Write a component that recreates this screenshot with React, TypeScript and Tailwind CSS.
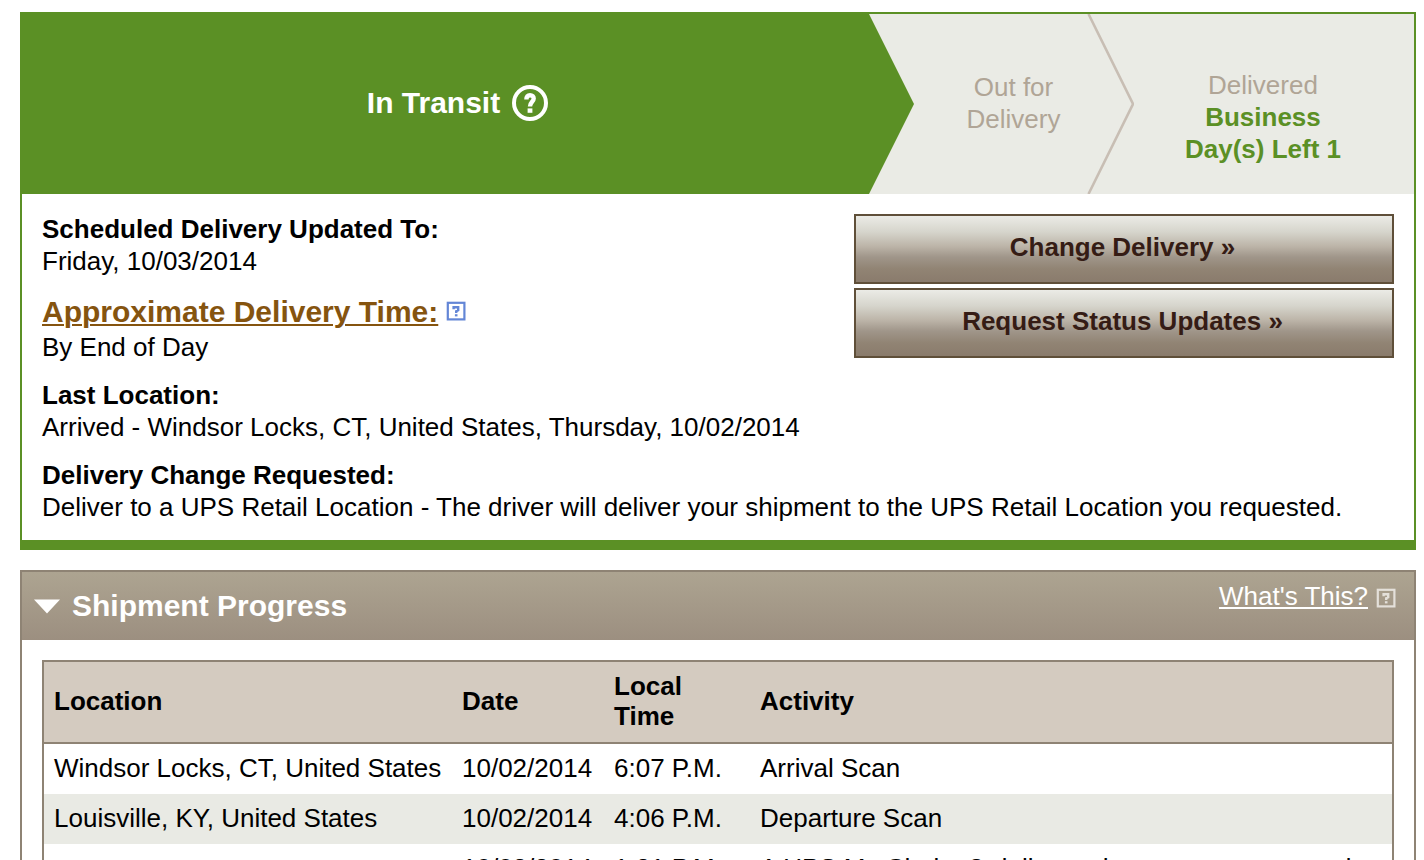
import React from 'react';

type Scan = { location: string; date: string; time: string; activity: string };

const scans: Scan[] = [
  { location: 'Windsor Locks, CT, United States', date: '10/02/2014', time: '6:07 P.M.', activity: 'Arrival Scan' },
  { location: 'Louisville, KY, United States', date: '10/02/2014', time: '4:06 P.M.', activity: 'Departure Scan' },
  { location: '', date: '10/02/2014', time: '1:21 P.M.', activity: 'A UPS My Choice® delivery change was requested' },
];

const actions = ['Change Delivery »', 'Request Status Updates »'];

const columns = ['Location', 'Date', 'Local Time', 'Activity'];

function HelpSquare({ className }: { className: string }) {
  return (
    <svg className={className} width="20" height="20" viewBox="0 0 20 20" fill="none" stroke="currentColor" aria-hidden="true">
      <rect x="1.8" y="1.8" width="16.6" height="16.6" strokeWidth="2.2" />
      <path d="M7.6 8.2V6.2H12.2V9.2L10.2 10.2V12" strokeWidth="2.4" />
      <path d="M10.2 13.2V15.4" strokeWidth="2.6" />
    </svg>
  );
}

function HelpCircle() {
  return (
    <svg width="36" height="36" viewBox="0 0 36 36" fill="none" stroke="#fff" aria-hidden="true">
      <circle cx="18" cy="18" r="16" strokeWidth="4" />
      <path d="M14.4 14.6C14.4 11.6 15.8 10.2 18 10.2C20.3 10.2 21.7 11.6 21.7 13.6C21.7 16.8 18 17 18 21.6" strokeWidth="4.4" />
      <path d="M18 23.4V27.8" strokeWidth="4.8" />
    </svg>
  );
}

function Detail({ title, children }: { title: string; children: React.ReactNode }) {
  return (
    <div>
      <h3 className="font-bold">{title}</h3>
      <p>{children}</p>
    </div>
  );
}

function StatusBanner() {
  return (
    <div className="flex h-[180px] items-stretch bg-[#eaebe5] text-center text-[#b0a596]">
      <div className="flex flex-1 items-center justify-center gap-3 bg-[#5b9025] pb-0.5 pl-6 text-[30px] font-bold leading-9 text-white">
        <span>In Transit</span>
        <button type="button" aria-label="Help with In Transit">
          <HelpCircle />
        </button>
      </div>
      <svg className="shrink-0" width="45" height="180" viewBox="0 0 45 180" aria-hidden="true">
        <path d="M0 0L45 90L0 180Z" fill="#5b9025" />
      </svg>
      <div className="flex w-[173px] shrink-0 items-center justify-center pb-0.5 pl-[26px]">
        <span className="w-24">Out for Delivery</span>
      </div>
      <svg className="shrink-0" width="47" height="180" viewBox="0 0 47 180" fill="none" aria-hidden="true">
        <path d="M1.5 0L46 90L1.5 180" stroke="#c8beb4" strokeWidth="2.6" />
      </svg>
      <div className="flex w-[280px] shrink-0 flex-col items-center justify-center pr-[22px] pt-[26px]">
        <span>Delivered</span>
        <span className="w-40 font-bold text-[#5b9025]">Business Day(s) Left 1</span>
      </div>
    </div>
  );
}

export default function App() {
  return (
    <main className="bg-white pb-5 pl-5 pr-2 pt-3 font-['Liberation_Sans',Arial,sans-serif] text-[26px] leading-8 text-black">
      <section className="border-2 border-b-10 border-[#5b9025]">
        <StatusBanner />
        <div className="flex flex-col gap-4 px-5 pb-[17px] pt-[19px]">
          <div className="flex items-start justify-between">
            <div className="flex flex-col gap-4">
              <Detail title="Scheduled Delivery Updated To:">Friday, 10/03/2014</Detail>
              <div>
                <h3 className="flex items-center gap-2 text-[30px] font-bold leading-[38px] text-[#85540f]">
                  <a href="#delivery-time" className="underline decoration-2 underline-offset-2">
                    Approximate Delivery Time:
                  </a>
                  <HelpSquare className="mb-0.5 text-[#6386d6]" />
                </h3>
                <p>By End of Day</p>
              </div>
            </div>
            <div className="flex w-[540px] flex-col gap-1 pt-px font-bold text-[#351c15]">
              {actions.map((label) => (
                <button
                  key={label}
                  type="button"
                  className="h-[70px] border-2 border-[#5f4f39] bg-[linear-gradient(to_bottom,#ebebe6_0%,#d6d5cc_24%,#bcb4a8_46%,#a0968a_62%,#918474_80%,#8a7b6c_100%)] pb-1 pr-[3px]"
                >
                  {label}
                </button>
              ))}
            </div>
          </div>
          <Detail title="Last Location:">Arrived - Windsor Locks, CT, United States, Thursday, 10/02/2014</Detail>
          <Detail title="Delivery Change Requested:">
            Deliver to a UPS Retail Location - The driver will deliver your shipment to the UPS Retail Location you requested.
          </Detail>
        </div>
      </section>

      <section className="mt-5 border-2 border-[#8e8374]">
        <div className="flex h-[68px] items-start justify-between bg-linear-to-b from-[#ada491] to-[#9c8f80] pl-3 pr-[18px] text-white">
          <h2 className="pt-4 text-[30px] font-bold leading-9">
            <button type="button" aria-expanded="true" className="flex items-center gap-3">
              <svg width="26" height="16" viewBox="0 0 26 16" aria-hidden="true">
                <path d="M0 1.5H26L13 15.5Z" fill="#fff" />
              </svg>
              Shipment Progress
            </button>
          </h2>
          <div className="flex items-center gap-2 pt-2">
            <a href="#whats-this" className="underline decoration-2 underline-offset-2">What's This?</a>
            <HelpSquare className="mt-1 text-[#e4e0da]" />
          </div>
        </div>
        <div className="p-5">
          <div className="border-2 border-[#8e8374]">
            <table className="w-full table-fixed border-separate border-spacing-0 text-left leading-[30px]">
              <colgroup>
                <col className="w-[408px]" />
                <col className="w-[152px]" />
                <col className="w-[146px]" />
                <col />
              </colgroup>
              <thead>
                <tr className="bg-[#d4cbc0]">
                  {columns.map((column) => (
                    <th key={column} className="border-b-2 border-[#8e8374] px-[10px] pb-[11px] pt-[9px]">
                      <span className="block max-w-28">{column}</span>
                    </th>
                  ))}
                </tr>
              </thead>
              <tbody>
                {scans.map((scan) => (
                  <tr key={scan.time} className="whitespace-nowrap even:bg-[#e9eae4]">
                    <td className="px-[10px] pb-[11px] pt-[9px]">{scan.location}</td>
                    <td className="px-[10px] pb-[11px] pt-[9px]">{scan.date}</td>
                    <td className="px-[10px] pb-[11px] pt-[9px]">{scan.time}</td>
                    <td className="px-[10px] pb-[11px] pt-[9px]">{scan.activity}</td>
                  </tr>
                ))}
              </tbody>
            </table>
          </div>
        </div>
      </section>
    </main>
  );
}
